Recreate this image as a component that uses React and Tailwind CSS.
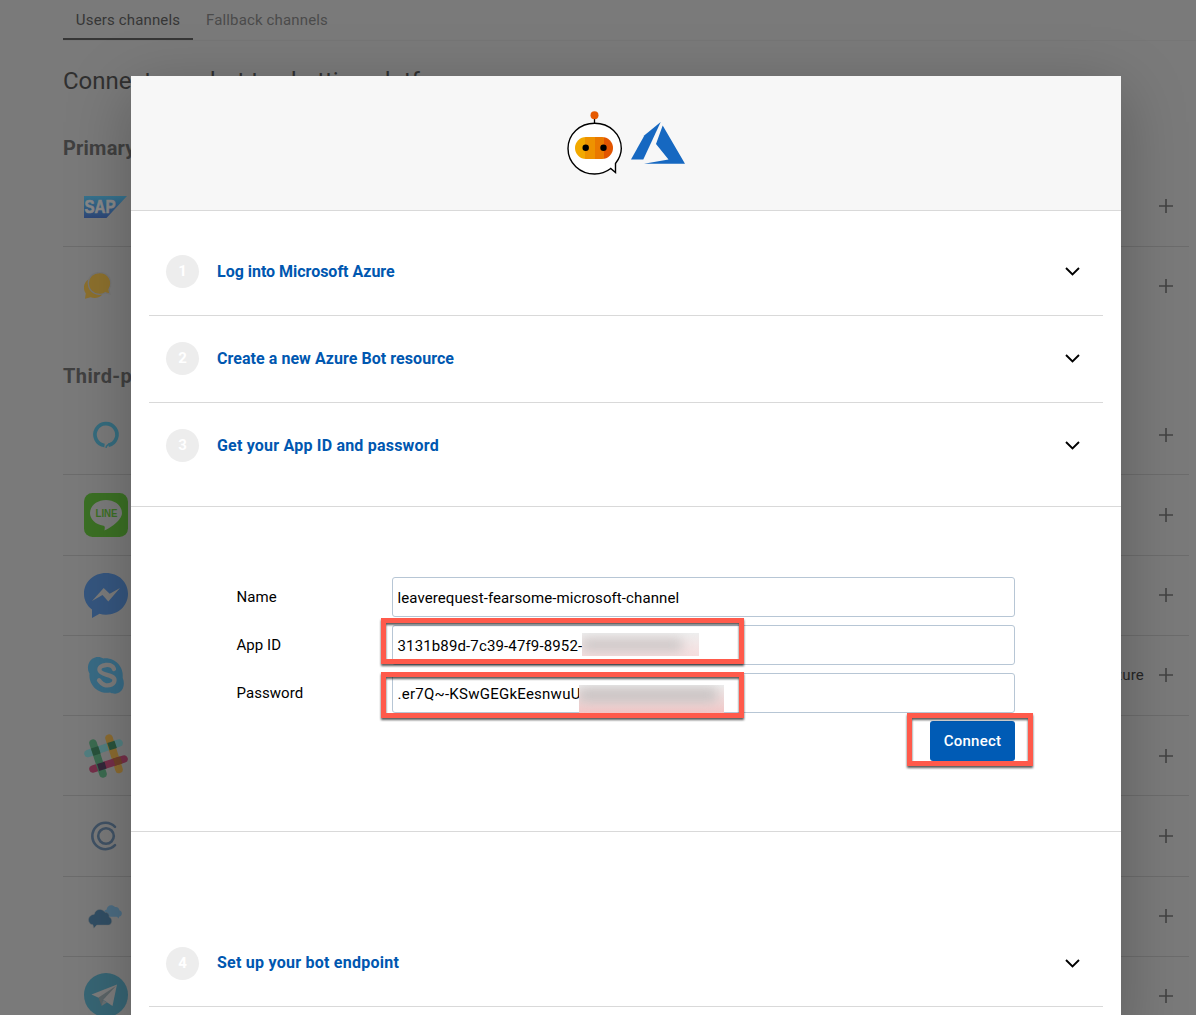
const Plus = () => (
  <svg className="h-[14px] w-[14px] shrink-0" viewBox="0 0 14 14" stroke="#434343" strokeWidth="1.6">
    <path d="M7 0v14M0 7h14" />
  </svg>
);

const Chevron = () => (
  <svg className="h-[9px] w-[15px] shrink-0" viewBox="0 0 15 9" fill="none" stroke="#000" strokeWidth="1.9">
    <path d="M1 1l6.5 6.4L14 1" />
  </svg>
);

const SapLogo = () => (
  <svg className="mt-[2px] h-[22px] w-[44px]" viewBox="0 0 44 22">
    <defs>
      <linearGradient id="sap" x1="0" y1="0" x2="0" y2="1">
        <stop offset="0" stopColor="#36748e" />
        <stop offset="1" stopColor="#2e4778" />
      </linearGradient>
    </defs>
    <path d="M0 0h43L22.500 22H0z" fill="url(#sap)" />
    <text x="0.500" y="17.300" fontFamily="Liberation Sans, sans-serif" fontWeight="bold" fontSize="18" textLength="31" lengthAdjust="spacingAndGlyphs" fill="#888" stroke="#888" strokeWidth=".7">SAP</text>
  </svg>
);

const ChatLogo = () => (
  <svg className="mt-px h-[28px] w-[44px]" viewBox="0 0 44 28" fill="#8c702d">
    <path d="M5 7C-.5 10-1.500 17 1.800 21.500L1 26.800l5.500-1.500c4.500 1.300 8.500.5 11.500-2.300L8 8z" />
    <path d="M15.500.5C9 .5 4.300 5 4.300 11c0 6.500 5 11.300 11.200 11.300 2.200 0 4-.6 5.700-1.600l4.700 1.400-.9-4.800C29.500 10 25 .5 15.500.5z" stroke="#757575" strokeWidth="1.300" />
  </svg>
);

const AlexaLogo = () => (
  <svg className="h-[28px] w-[44px]" viewBox="0 0 44 28" fill="none" stroke="#356c7e" strokeWidth="3.600">
    <path d="M20.500 24.500A11 11 0 1 1 24.500 24.300" />
    <path d="M22 26.800c.3-2.500 2-3.600 5-4.600" strokeWidth="1.500" />
  </svg>
);

const LineLogo = () => (
  <svg className="h-[44px] w-[44px]" viewBox="0 0 44 44">
    <rect width="44" height="44" rx="8.500" fill="#3b7024" />
    <path d="M22 7C13 7 6 12.800 6 20c0 6 5 11.300 13.500 12.700 1.700.4 1.400 1.800 1 4.800 5-2 17.500-10 17.500-17.500C38 12.800 31 7 22 7z" fill="#7b7b7b" />
    <text x="22.500" y="24.200" textAnchor="middle" fontFamily="Liberation Sans, sans-serif" fontWeight="bold" fontSize="10.500" textLength="22" lengthAdjust="spacingAndGlyphs" fill="#3b7024">LINE</text>
  </svg>
);

const MessengerLogo = () => (
  <svg className="h-[45px] w-[44px]" viewBox="0 0 44 45">
    <path d="M22 0C9.500 0 0 9 0 20.800c0 6.500 3 12 8 15.800V45l7.500-4.200c2 .6 4.200.9 6.500.9 12.500 0 22-9 22-20.900S34.500 0 22 0z" fill="#35567f" />
    <path d="M8 28l11.700-13 6 5.700L36 15 24.300 28.500 18.500 22z" fill="#7b7b7b" />
  </svg>
);

const SkypeLogo = () => (
  <svg className="mt-[2px] h-[38px] w-[44px]" viewBox="0 0 44 38">
    <path d="M14 0c2 0 4 .6 5.500 1.500C30 .2 40 9 38.700 21 42 28.500 38 36.700 31 36.700c-2 0-3.500-.4-5-1.200C14.500 37.500 4.500 28.500 5.500 16.500 1.500 9 6 0 14 0z" fill="#386b85" />
    <path d="M30 12c-1.200-3.500-4.500-4.300-8-4-4.500.3-7 2.500-6.500 5.300.7 5.200 15 4 15 9.700 0 4.500-5 5.700-8.500 5.300-4-.5-5-2.800-7-5" fill="none" stroke="#7b7b7b" strokeWidth="4.300" strokeLinecap="round" />
  </svg>
);

const SlackLogo = () => (
  <svg className="h-[44px] w-[44px]" viewBox="0 0 44 44" fill="none" strokeWidth="7.500" strokeLinecap="round">
    <path d="M4 19.500L35 9" stroke="#527f81" />
    <path d="M25 4l10 31.500" stroke="#8b6b30" />
    <path d="M9 35l31-10" stroke="#752f49" />
    <path d="M9 9l10 31" stroke="#3b6b50" />
    <path d="M7 14.500l7.200-2.300 2.400 7.200-7.200 2.300zM23.300 9.100l7.200-2.400 2.400 7.200-7.200 2.400z" fill="#29533c" />
    <path d="M13 30l7.500-2.300 2 6.800-7.300 2.500z" fill="#33283a" />
    <path d="M29 24.600l7.200-2.200 2.200 7-7.200 2.300z" fill="#704029" />
  </svg>
);

const CiscoLogo = () => (
  <svg className="h-[30px] w-[44px]" viewBox="0 0 44 30" fill="none" stroke="#405265" strokeWidth="2.600">
    <path d="M31 5.800A13.200 13.200 0 1 0 31 24.200" strokeLinecap="round" />
    <circle cx="22" cy="15" r="7.800" />
  </svg>
);

const CloudLogo = () => (
  <svg className="mt-[2px] h-[26px] w-[44px]" viewBox="0 0 44 26">
    <path d="M20 8.500c0-2 1-3.200 2.500-3.200C23 .5 28-.8 31 2.500c2.500-.5 4.500 1.300 4.300 3.300 3.500.7 3.300 5.700 0 6.200L34.500 14l-1.500-1.700H21z" transform="translate(0 .5)" fill="#4c6c82" />
    <path d="M9.500 11.500c1-5.500 8-7 11-2 3 0 5 2 4.500 4.800 4 1.700 3.200 8.200-.8 8.500H12l-3 3.200-1-3.500c-6-.8-6.500-10 1.500-11z" transform="translate(1.200 -.8) scale(.96)" fill="#314e64" stroke="#6d7070" strokeWidth=".5" />
  </svg>
);

const TelegramLogo = () => (
  <svg className="-mt-[2px] h-[44px] w-[44px]" viewBox="0 0 44 44">
    <circle cx="22" cy="22" r="22" fill="#376574" />
    <path d="M7.500 21.500L33 11.500 28.500 33 19.500 27z" fill="#7c7c7c" />
    <path d="M14.500 24.500L32 13 19 27l-1.500 6z" fill="#5b6467" />
    <path d="M17.500 33l1.500-6 4 2.600z" fill="#6a7072" />
  </svg>
);

const primary = [SapLogo, ChatLogo];
const thirdParty = [AlexaLogo, LineLogo, MessengerLogo, SkypeLogo, SlackLogo, CiscoLogo, CloudLogo, TelegramLogo];

function ChannelList({ items, notes = {} }) {
  return (
    <ul className="mr-[7px]">
      {items.map((Logo, i) => (
        <li key={i} className={`flex h-[80.25px] items-center justify-between pl-[21px] pr-[16px] ${i < items.length - 1 ? "border-b border-[#6c6c6c]" : "pb-[2px]"}`}>
          <Logo />
          <div className="flex items-center gap-[15px] text-[15px] tracking-[0.2px] text-[#262626]">
            {notes[i]}
            <Plus />
          </div>
        </li>
      ))}
    </ul>
  );
}

function Step({ n, title, line = true, raised = true, spacing }) {
  return (
    <div className={`mx-[18px] flex h-[87px] items-center border-b pl-[17px] pr-[23px] ${line ? "border-[#d9d9d9]" : "border-transparent"} ${raised ? "pb-[2px]" : ""}`}>
      <span className="flex h-[33px] w-[33px] items-center justify-center rounded-full bg-[#ededed] text-[15px] font-bold text-white">{n}</span>
      <span className={`ml-[18px] flex-1 text-[16px] leading-5 font-bold text-[#0057b0] ${raised ? "pt-px" : ""} ${spacing}`}>{title}</span>
      <Chevron />
    </div>
  );
}

function Field({ label, value, spacing, children }) {
  return (
    <div className="flex h-10 items-center">
      <label className="w-[155.500px] text-[15px] tracking-[0.05px]">{label}</label>
      <div className={`relative flex h-10 w-[623px] items-center rounded-[3px] border border-[#b7c6d5] bg-white pl-[4.500px] pt-[2px] text-[15px] ${spacing}`}>
        {value}
        {children}
      </div>
    </div>
  );
}

const Highlight = ({ className }) => (
  <div className={`absolute border-[5.500px] border-[#ff5a4b] drop-shadow-[0_2px_1px_rgba(0,0,0,0.65)] ${className}`} />
);

const BotLogo = () => (
  <svg className="h-[66px] w-[58px]" viewBox="0 0 58 66">
    <path d="M28.500 8v6" stroke="#000" strokeWidth="1.300" />
    <circle cx="28.500" cy="5.300" r="4" fill="#e65a00" />
    <path d="M49.500 53.500C53 49 55.300 44 55.300 38.500 55.300 24 43.500 13.200 28.700 13.200S2 24 2 38.500s12 25.500 26.700 25.500c6 0 11.500-2 16-5.500l4.800 4z" fill="#fff" stroke="#000" strokeWidth="1.400" />
    <clipPath id="face"><rect x="9" y="27" width="38" height="22" rx="11" /></clipPath>
    <g clipPath="url(#face)">
      <path d="M9 27h10v22H9z" fill="#f2a900" />
      <path d="M19 27h10v22H19z" fill="#ee9200" />
      <path d="M29 27h9v22h-9z" fill="#ea7900" />
      <path d="M38 27h9v22h-9z" fill="#e35500" />
    </g>
    <circle cx="19.700" cy="37.800" r="3.200" />
    <circle cx="37.500" cy="37.800" r="3.200" />
  </svg>
);

const AzureLogo = () => (
  <svg className="h-[43px] w-[54px]" viewBox="0 0 54 43" fill="#1668c1">
    <path d="M29.700 0L13.500 13.300 0 37.500h12.300z" />
    <path d="M31.700 3.500L25 22l12.500 15.500L13 41.700h41z" />
  </svg>
);

export default function App() {
  return (
    <div className="relative h-[1015px] w-[1196px] overflow-hidden bg-[#7a7a7a] font-['Roboto','Open_Sans',sans-serif] leading-5">
      <div className="pl-[63px]">
        <nav className="flex h-[41px] border-b border-[#767676] text-[15px] tracking-[0.15px]">
          <span className="h-[40px] w-[130px] border-b-2 border-[#363636] pt-[10px] text-center text-[#363636]">Users channels</span>
          <span className="ml-[13px] pt-[10px] text-[#4b4b4b]">Fallback channels</span>
        </nav>
        <h1 className="mt-[25px] h-[30px] text-[24px] leading-[30px] text-[#303030]">Connect your bot to chatting platforms</h1>
        <h2 className="mt-[42px] h-5 text-[20px] font-bold tracking-[0.2px] text-[#404040]">Primary</h2>
        <div className="mt-[8.500px]"><ChannelList items={primary} /></div>
        <h2 className="mt-[38.500px] h-5 text-[20px] font-bold tracking-[0.4px] text-[#404040]">Third-party</h2>
        <div className="mt-[9.500px]"><ChannelList items={thirdParty} notes={{ 3: "Microsoft Azure" }} /></div>
      </div>

      <section className="absolute left-[131px] top-[76px] h-[960px] w-[990px] bg-white text-black shadow-[0_16px_60px_rgba(0,0,0,0.25)]">
        <header className="flex h-[135px] items-start justify-center gap-[6.500px] border-b border-[#d9d9d9] bg-[#f7f7f7] pr-[1.500px] pt-[34px]">
          <BotLogo />
          <div className="pt-[12px]"><AzureLogo /></div>
        </header>
        <div className="h-[296px] border-b border-[#d9d9d9] pt-[18px]">
          <Step n="1" title="Log into Microsoft Azure" spacing="tracking-[-0.02px]" />
          <Step n="2" title="Create a new Azure Bot resource" spacing="tracking-[0.05px]" />
          <Step n="3" title="Get your App ID and password" line={false} spacing="tracking-[0.2px]" />
        </div>
        <form className="relative flex h-[325px] flex-col gap-2 border-b border-[#d9d9d9] pl-[105.500px] pt-[70px]">
          <Field label="Name" value="leaverequest-fearsome-microsoft-channel" spacing="tracking-[0.09px]" />
          <Field label="App ID" value="3131b89d-7c39-47f9-8952-" spacing="tracking-[0.14px]">
            <div className="absolute left-[189px] top-[7px] h-[23px] w-[117px] overflow-hidden bg-gradient-to-b from-[#eeeeee] to-[#f6dede]">
              <div className="mt-[6px] h-[12px] w-[100px] bg-[#c9c4c4] blur-[6px]" />
            </div>
          </Field>
          <Field label="Password" value=".er7Q~-KSwGEGkEesnwuU" spacing="tracking-[0.25px]">
            <div className="absolute left-[186px] top-[11px] h-[28px] w-[145px] overflow-hidden bg-gradient-to-b from-[#eeeeee] to-[#f2c6c6]">
              <div className="mt-[3px] h-[14px] w-[138px] bg-[#c6c2c2] blur-[6px]" />
            </div>
          </Field>
          <button type="button" className="ml-[693.500px] h-10 w-[85px] rounded-[3px] bg-[#005bb5] text-[15px] font-medium tracking-[0.2px] text-white">Connect</button>
          <Highlight className="left-[250px] top-[111px] h-[46px] w-[363px]" />
          <Highlight className="left-[250px] top-[165px] h-[46px] w-[363px]" />
          <Highlight className="left-[776px] top-[206px] h-[53px] w-[126px]" />
        </form>
        <div className="pt-[88px]">
          <Step n="4" title="Set up your bot endpoint" raised={false} spacing="tracking-[0.24px]" />
        </div>
      </section>
    </div>
  );
}
